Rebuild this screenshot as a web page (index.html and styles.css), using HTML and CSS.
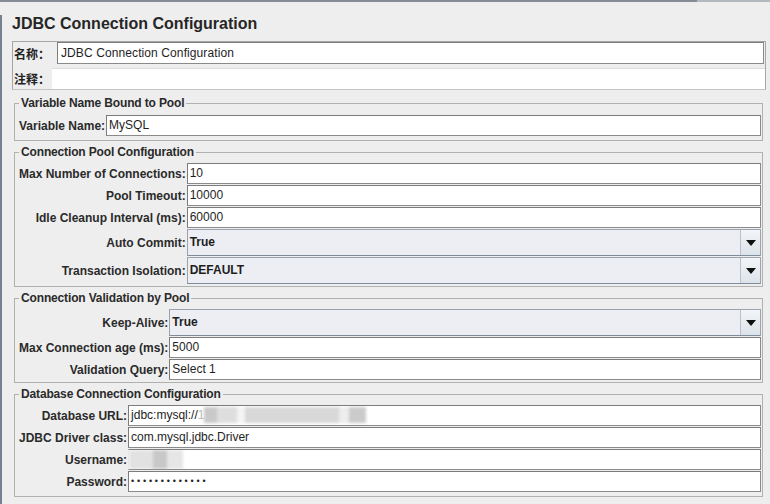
FILE: index.html
```html
<!DOCTYPE html>
<html>
<head>
<meta charset="utf-8">
<link rel="stylesheet" href="styles.css">
</head>
<body>
<div class="topline"></div>
<div class="frame">
  <h1 class="title">JDBC Connection Configuration</h1>

  <div class="name-panel">
    <div class="name-row">
      <span class="cjk lbl-name">名称：</span>
      <div class="field">JDBC Connection Configuration</div>
    </div>
    <div class="comment-row">
      <span class="cjk lbl-comment">注释：</span>
      <div class="area"></div>
    </div>
  </div>

  <fieldset class="group g1">
    <legend>Variable Name Bound to Pool</legend>
    <div class="grid">
      <span class="lbl">Variable Name:</span><div class="field">MySQL</div>
    </div>
  </fieldset>

  <fieldset class="group g2">
    <legend>Connection Pool Configuration</legend>
    <div class="grid">
      <span class="lbl">Max Number of Connections:</span><div class="field">10</div>
      <span class="lbl">Pool Timeout:</span><div class="field">10000</div>
      <span class="lbl">Idle Cleanup Interval (ms):</span><div class="field">60000</div>
      <span class="lbl">Auto Commit:</span>
      <div class="combo"><span class="val">True</span><span class="btn"><svg width="10" height="6" viewBox="0 0 10 6"><path d="M0 0H10L5 6Z" fill="#111"/></svg></span></div>
      <span class="lbl">Transaction Isolation:</span>
      <div class="combo"><span class="val">DEFAULT</span><span class="btn"><svg width="10" height="6" viewBox="0 0 10 6"><path d="M0 0H10L5 6Z" fill="#111"/></svg></span></div>
    </div>
  </fieldset>

  <fieldset class="group g3">
    <legend>Connection Validation by Pool</legend>
    <div class="grid">
      <span class="lbl">Keep-Alive:</span>
      <div class="combo"><span class="val">True</span><span class="btn"><svg width="10" height="6" viewBox="0 0 10 6"><path d="M0 0H10L5 6Z" fill="#111"/></svg></span></div>
      <span class="lbl">Max Connection age (ms):</span><div class="field">5000</div>
      <span class="lbl">Validation Query:</span><div class="field">Select 1</div>
    </div>
  </fieldset>

  <fieldset class="group g4">
    <legend>Database Connection Configuration</legend>
    <div class="grid">
      <span class="lbl">Database URL:</span>
      <div class="field">jdbc:mysql://<span class="faded">1</span><span class="redact"><i class="r1"></i><i class="r2"></i><i class="r3"></i><i class="r4"></i><i class="r5"></i><i class="r6"></i></span></div>
      <span class="lbl">JDBC Driver class:</span><div class="field">com.mysql.jdbc.Driver</div>
      <span class="lbl">Username:</span>
      <div class="field nopad"><span class="redact user"><i class="u1"></i><i class="u2"></i><i class="u3"></i></span></div>
      <span class="lbl">Password:</span><div class="field"><span class="dots">•••••••••••••</span></div>
    </div>
  </fieldset>
</div>
</body>
</html>
```
FILE: styles.css
```css
html, body {
  margin: 0;
  padding: 0;
}
body {
  width: 770px;
  height: 504px;
  overflow: hidden;
  background: #eeeeee;
  font-family: "Liberation Sans", Arial, sans-serif;
  font-size: 12px;
  color: #222222;
}
.topline {
  height: 2px;
  background: linear-gradient(to right, #858c95 697px, #b4b9bf 697px);
}
.frame {
  height: 502px;
  box-sizing: border-box;
  border-left: 2px solid #74818f;
  padding: 0 4px 0 10px;
}
.title {
  margin: 13px 0 8px 0;
  font-size: 16px;
  line-height: 18px;
  font-weight: bold;
  color: #262626;
}
.cjk {
  font-family: "Liberation Sans", "Noto Sans CJK SC", sans-serif;
  font-weight: bold;
  font-size: 12px;
  color: #222;
  padding-left: 1px;
  box-sizing: border-box;
  white-space: nowrap;
}
.lbl-name { width: 44px; flex: none; }
.lbl-comment { width: 39px; flex: none; }
.name-panel {
  border: 1px solid #a6a6a6;
  border-bottom-color: #c4c4c4;
}
.name-row {
  display: flex;
  align-items: center;
  height: 22px;
  padding-right: 1px;
}
.comment-row {
  display: flex;
  align-items: center;
  margin-top: 4px;
}
.area {
  flex: 1;
  height: 21px;
  background: #ffffff;
  border-top: 1px solid #dcdcdc;
  box-sizing: border-box;
}
.field {
  flex: 1;
  height: 21px;
  box-sizing: border-box;
  background: #ffffff;
  border: 1px solid #8a8a8a;
  border-top-color: #7c7c7c;
  border-left-color: #7c7c7c;
  padding: 0 2px;
  line-height: 19px;
  white-space: nowrap;
  overflow: hidden;
  color: #1e1e1e;
}
.name-row .field {
  height: 22px;
  line-height: 20px;
  padding-left: 3px;
  letter-spacing: 0.1px;
}
.group {
  margin: 4px 3px 0 2px;
  padding: 4px 1px 2px 4px;
  border: 1px solid #b1b1b1;
  min-width: 0;
}
.g1 { margin-top: 6px; padding-top: 5px; padding-bottom: 4px; }
.g4 { padding-bottom: 4px; }
.group legend {
  padding: 0 2px;
  margin: 0;
  font-weight: bold;
  font-size: 12px;
  line-height: 14px;
  letter-spacing: -0.15px;
  color: #2a2a2a;
}
.grid {
  display: grid;
  grid-template-columns: auto 1fr;
  column-gap: 1px;
  row-gap: 1px;
  align-items: center;
}
.lbl {
  text-align: right;
  font-weight: bold;
  white-space: nowrap;
  color: #2a2a2a;
}
.combo {
  height: 27px;
  box-sizing: border-box;
  display: flex;
  border: 1px solid #9aa3ae;
  border-bottom-color: #7e8c9c;
  background: #eceef3;
}
.combo .val {
  flex: 1;
  font-weight: bold;
  padding-left: 2px;
  line-height: 25px;
  color: #1e1e1e;
}
.combo .btn {
  width: 19px;
  border-left: 1px solid #b8c0cb;
  background: linear-gradient(#f3f5f8, #dde3ea);
  display: flex;
  align-items: center;
  justify-content: center;
}
.faded { color: #bbbbbb; }
.redact {
  display: inline-flex;
  vertical-align: middle;
  height: 16px;
  margin-top: -2px;
  filter: blur(1.5px);
}
.redact i {
  display: block;
  height: 16px;
}
.r1 { width: 13px; background: #c9c9c9; }
.r2 { width: 20px; background: #dedede; }
.r3 { width: 8px; background: #f4f4f4; }
.r4 { width: 94px; background: #d8d8d8; }
.r5 { width: 10px; background: #ededed; }
.r6 { width: 17px; background: #cbcbcb; }
.nopad { padding: 0; border-left-color: #e6e6e6; }
.user { height: 19px; margin-top: 0; }
.user i { height: 19px; }
.u1 { width: 24px; background: #e2e2e2; }
.u2 { width: 14px; background: #c8c8c8; }
.u3 { width: 16px; background: #e6e6e6; }
.dots {
  font-size: 9px;
  letter-spacing: 2.8px;
  color: #222;
  vertical-align: top;
}
```
